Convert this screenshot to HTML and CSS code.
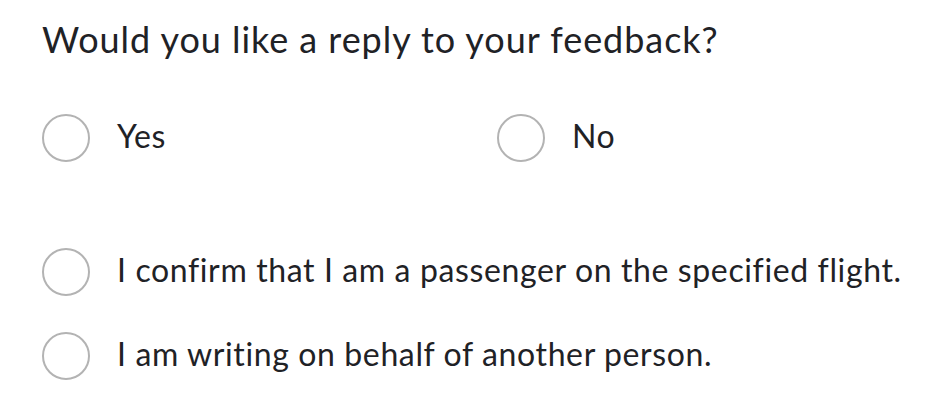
FILE: index.html
```html
<!DOCTYPE html>
<html lang="en">
<head>
<meta charset="utf-8">
<link rel="stylesheet" href="styles.css">
</head>
<body>
<form class="feedback">
  <h2 class="question">Would you like a reply to your feedback?</h2>
  <div class="choice-row">
    <label class="choice choice-half"><span class="radio"></span><span class="label">Yes</span></label>
    <label class="choice choice-half"><span class="radio"></span><span class="label">No</span></label>
  </div>
  <div class="confirm-list">
    <label class="choice"><span class="radio"></span><span class="label">I confirm that I am a passenger on the specified flight.</span></label>
    <label class="choice"><span class="radio"></span><span class="label">I am writing on behalf of another person.</span></label>
  </div>
</form>
</body>
</html>
```

FILE: styles.css
```css
html, body {
  margin: 0;
  padding: 0;
  background: #ffffff;
}
body {
  font-family: Lato, "Noto Sans", sans-serif;
  color: #1f2226;
}
.feedback {
  padding: 15px 0 0 42px;
}
.question {
  margin: 0;
  font-size: 36px;
  font-weight: 400;
  line-height: 48px;
  letter-spacing: 0.95px;
}
.choice-row {
  display: flex;
  margin-top: 51px;
}
.choice-half {
  width: 455px;
}
.confirm-list {
  display: flex;
  flex-direction: column;
  gap: 36px;
  margin-top: 86px;
}
.choice {
  display: flex;
  align-items: center;
  gap: 27px;
  font-size: 32px;
  line-height: 48px;
  letter-spacing: 0.62px;
}
.label {
  line-height: 44px;
  padding-bottom: 4px;
}
.radio {
  box-sizing: border-box;
  width: 48px;
  height: 48px;
  border: 2px solid #b3b3b3;
  border-radius: 50%;
  flex: none;
}
```
